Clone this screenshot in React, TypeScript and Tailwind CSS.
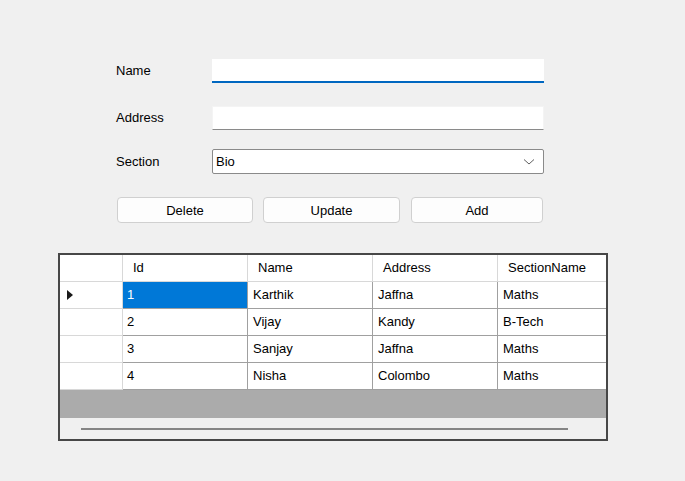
import React from "react";

type Student = {
  id: number;
  name: string;
  address: string;
  section: string;
};

const students: Student[] = [
  { id: 1, name: "Karthik", address: "Jaffna", section: "Maths" },
  { id: 2, name: "Vijay", address: "Kandy", section: "B-Tech" },
  { id: 3, name: "Sanjay", address: "Jaffna", section: "Maths" },
  { id: 4, name: "Nisha", address: "Colombo", section: "Maths" },
];

const headers = ["Id", "Name", "Address", "SectionName"];

const cols = "grid grid-cols-[63px_125px_125px_125px_1fr]";

const FormRow = ({ label, children }: { label: string; children: React.ReactNode }) => (
  <div className="flex items-center">
    <span className="w-[96px] shrink-0">{label}</span>
    {children}
  </div>
);

const WinButton = ({ label, width }: { label: string; width: string }) => (
  <button
    className={`${width} h-[26px] bg-[#fdfdfd] border border-[#d0d0d0] rounded-[4px] text-black pt-[1px]`}
  >
    {label}
  </button>
);

export default function App() {
  return (
    <div
      className="w-[685px] h-[481px] bg-[#f0f0f0] text-[13px] text-black overflow-hidden"
      style={{ fontFamily: '"Liberation Sans", Arial, sans-serif' }}
    >
      {/* FORM */}
      <div className="pl-[116px] pt-[59px] flex flex-col">
        <FormRow label="Name">
          <div className="w-[332px] h-[24px] bg-white border-b-2 border-[#0067c0]" />
        </FormRow>

        <div className="mt-[23px]">
          <FormRow label="Address">
            <div className="w-[332px] h-[24px] bg-white border-t border-x border-[#f4f4f4] border-b border-b-[#8a8a8a]" />
          </FormRow>
        </div>

        <div className="mt-[19px]">
          <FormRow label="Section">
            <div className="w-[332px] h-[25px] bg-white border border-[#8a8a8a] rounded-[2px] flex items-center justify-between pl-[3px] pr-[8px]">
              <span>Bio</span>
              <svg width="12" height="8" viewBox="0 0 12 8">
                <path d="M1 1.5 L6 6 L11 1.5" fill="none" stroke="#606060" strokeWidth="1" />
              </svg>
            </div>
          </FormRow>
        </div>

        <div className="mt-[23px] flex pl-[1px]">
          <WinButton label="Delete" width="w-[136px]" />
          <div className="w-[10px]" />
          <WinButton label="Update" width="w-[137px]" />
          <div className="w-[11px]" />
          <WinButton label="Add" width="w-[132px]" />
        </div>
      </div>

      {/* GRID */}
      <div className="ml-[58px] mt-[30px] w-[550px] h-[188px] border-2 border-[#474747] flex flex-col bg-white">
        <div className={`${cols} h-[27px] border-b border-[#d8d8d8]`}>
          <div className="border-r border-[#d8d8d8]" />
          {headers.map((h, i) => (
            <div
              key={h}
              className={`pl-[10px] flex items-center ${i < headers.length - 1 ? "border-r border-[#d8d8d8]" : ""}`}
            >
              {h}
            </div>
          ))}
        </div>

        {students.map((s, r) => (
          <div key={s.id} className={`${cols} h-[27px]`}>
            <div className="border-r border-b border-[#d8d8d8] flex items-center pl-[7px]">
              {r === 0 && (
                <svg width="6" height="10" viewBox="0 0 6 10">
                  <path d="M0 0 L6 5 L0 10 Z" fill="#1a1a1a" />
                </svg>
              )}
            </div>
            <div
              className={`flex items-center pl-[4px] border-r border-b border-[#a0a0a0] ${
                r === 0 ? "bg-[#0078d7] text-white" : ""
              }`}
            >
              {s.id}
            </div>
            <div className="flex items-center pl-[5px] border-r border-b border-[#a0a0a0]">{s.name}</div>
            <div className="flex items-center pl-[5px] border-r border-b border-[#a0a0a0]">{s.address}</div>
            <div className="flex items-center pl-[5px] border-b border-[#a0a0a0]">{s.section}</div>
          </div>
        ))}

        <div className="flex-1 bg-[#ababab]" />

        {/* HORIZONTAL SCROLLBAR */}
        <div className="h-[21px] bg-[#f0f0f0] flex items-center pl-[21px]">
          <div className="w-[487px] h-[2px] bg-[#858585]" />
        </div>
      </div>
    </div>
  );
}
